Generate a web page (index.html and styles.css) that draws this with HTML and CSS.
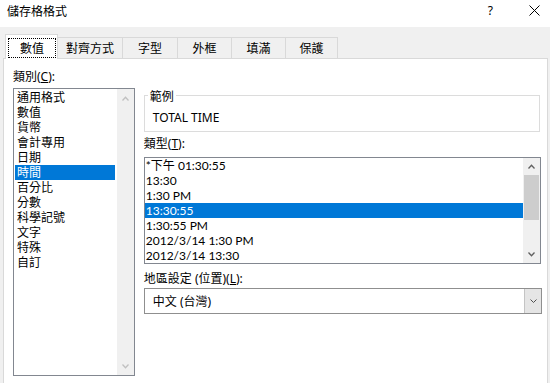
FILE: index.html
```html
<!DOCTYPE html>
<html lang="zh-Hant">
<head>
<meta charset="utf-8">
<title>儲存格格式</title>
<link rel="stylesheet" href="styles.css">
</head>
<body>
<div class="dialog">
  <div class="titlebar">
    <span class="title">儲存格格式</span>
    <span class="help">?</span>
    <span class="close"><svg width="11" height="11" viewBox="0 0 11 11"><path d="M0.5 0.5 L10.5 10.5 M10.5 0.5 L0.5 10.5" stroke="#000" stroke-width="1" fill="none"/></svg></span>
  </div>
  <div class="body">
    <div class="tabs">
      <div class="tab active w1"><span class="focus">數值</span></div>
      <div class="tab w2">對齊方式</div>
      <div class="tab w3">字型</div>
      <div class="tab w4">外框</div>
      <div class="tab w4">填滿</div>
      <div class="tab w5">保護</div>
    </div>
    <div class="panel">
      <div class="label">類別(<u>C</u>):</div>
      <div class="cols">
        <div class="listbox catlist">
          <ul class="items">
            <li>通用格式</li>
            <li>數值</li>
            <li>貨幣</li>
            <li>會計專用</li>
            <li>日期</li>
            <li class="sel">時間</li>
            <li>百分比</li>
            <li>分數</li>
            <li>科學記號</li>
            <li>文字</li>
            <li>特殊</li>
            <li>自訂</li>
          </ul>
          <div class="vscroll disabled">
            <span class="arrow"><svg width="7" height="5" viewBox="0 0 7 5"><polyline points="0.5,4.5 3.5,1.2 6.5,4.5"/></svg></span>
            <span class="track"></span>
            <span class="arrow"><svg width="7" height="5" viewBox="0 0 7 5"><polyline points="0.5,0.5 3.5,3.8 6.5,0.5"/></svg></span>
          </div>
        </div>
        <div class="right">
          <fieldset class="sample">
            <legend>範例</legend>
            <div class="sample-text">TOTAL TIME</div>
          </fieldset>
          <div class="label type-label">類型(<u>T</u>):</div>
          <div class="listbox typelist">
            <ul class="items">
              <li>*下午 01:30:55</li>
              <li>13:30</li>
              <li>1:30 PM</li>
              <li class="sel">13:30:55</li>
              <li>1:30:55 PM</li>
              <li>2012/3/14 1:30 PM</li>
              <li>2012/3/14 13:30</li>
            </ul>
            <div class="vscroll">
              <span class="arrow"><svg width="7" height="5" viewBox="0 0 7 5"><polyline points="0.5,4.5 3.5,1.2 6.5,4.5"/></svg></span>
              <span class="track"><span class="thumb"></span></span>
              <span class="arrow"><svg width="7" height="5" viewBox="0 0 7 5"><polyline points="0.5,0.5 3.5,3.8 6.5,0.5"/></svg></span>
            </div>
          </div>
          <div class="label locale-label">地區設定 (位置)(<u>L</u>):</div>
          <div class="combo">
            <span class="combo-text">中文 (台灣)</span>
            <span class="dropbtn"><svg width="7" height="4" viewBox="0 0 7 4"><polyline points="0.5,0.5 3.5,3.5 6.5,0.5"/></svg></span>
          </div>
        </div>
      </div>
    </div>
  </div>
</div>
</body>
</html>
```

FILE: styles.css
```css
* { box-sizing: border-box; }

html, body {
  margin: 0;
  padding: 0;
}

body {
  width: 550px;
  height: 383px;
  overflow: hidden;
  background: #f0f0f0;
  font-family: "Noto Sans", "Noto Sans CJK TC", sans-serif;
  font-size: 12px;
  line-height: 15px;
  color: #000;
}

.dialog {
  width: 550px;
}

.titlebar {
  height: 27px;
  background: #fff;
  display: flex;
  align-items: flex-start;
  padding: 3px 10px 0 7px;
}

.title {
  font-family: "Noto Sans CJK TC", sans-serif;
}

.help {
  margin-left: auto;
  margin-right: 36px;
}

.close {
  display: flex;
  padding-top: 2px;
}

.body {
  padding: 7px 2px 0 3px;
}

.tabs {
  display: flex;
  align-items: flex-end;
  height: 24px;
  padding-left: 2px;
}

.tab {
  height: 21px;
  border: 1px solid #d9d9d9;
  border-bottom: none;
  background: #f0f0f0;
  text-align: center;
  padding-top: 2px;
  margin-left: -1px;
  font-family: "Noto Sans CJK TC", sans-serif;
}

.tab.active {
  height: 25px;
  margin-left: 0;
  margin-bottom: -1px;
  background: #fff;
  padding: 3px 1px 1px 2px;
  position: relative;
  z-index: 1;
}

.focus {
  display: block;
  height: 20px;
  border: 1px dotted #000;
  padding-top: 1px;
}

.w1 { width: 53px; }
.w2 { width: 66px; }
.w3 { width: 56px; }
.w4 { width: 55px; }
.w5 { width: 53px; }

.panel {
  background: #fff;
  border: 1px solid #d9d9d9;
  padding: 10px 5px 0 9px;
  height: 340px;
}

.cols {
  display: flex;
  gap: 9px;
  margin-top: 4px;
}

.listbox {
  display: flex;
  border: 1px solid #828790;
  background: #fff;
}

.items {
  list-style: none;
  margin: 0;
  flex: 1;
  font-family: "Lato", "Noto Sans CJK TC", sans-serif;
}

.items li {
  height: 15px;
  white-space: nowrap;
}

.items li.sel {
  background: #0078d7;
  color: #fff;
}

.catlist {
  width: 122px;
  height: 288px;
}

.catlist .items {
  padding: 1px 2px 0 1px;
}

.catlist .items li {
  padding-left: 2px;
}

.vscroll {
  width: 17px;
  background: #f0f0f0;
  display: flex;
  flex-direction: column;
}

.vscroll .arrow {
  height: 17px;
  display: flex;
  align-items: center;
  justify-content: center;
}

.vscroll .track {
  flex: 1;
  display: flex;
  flex-direction: column;
}

.vscroll svg polyline {
  fill: none;
  stroke: #606060;
  stroke-width: 1.3;
}

.vscroll.disabled svg polyline {
  stroke: #c0c0c0;
}

.catlist .vscroll .arrow {
  height: 18px;
}

.thumb {
  display: block;
  height: 45px;
  margin: 0 1px;
  background: #cdcdcd;
}

.right {
  width: 399px;
  display: flex;
  flex-direction: column;
}

.sample {
  margin: 0 2px 0 0;
  padding: 7px 4px 6px 8px;
  border: 1px solid #dcdcdc;
  min-width: 0;
}

.sample legend {
  padding: 0 2px;
  margin-left: -5px;
  font-family: "Noto Sans CJK TC", sans-serif;
}

.sample-text {
  height: 15px;
}

.type-label {
  margin-top: 4px;
}

.typelist {
  margin-top: 6px;
  margin-right: 1px;
  height: 107px;
}

.typelist .items {
  padding: 0;
}

.typelist .items li {
  padding-left: 1px;
}

.locale-label {
  margin-top: 7px;
}

.combo {
  margin-top: 2px;
  height: 26px;
  border: 1px solid #8f8f8f;
  display: flex;
  align-items: stretch;
}

.combo-text {
  flex: 1;
  padding-left: 8px;
  display: flex;
  align-items: center;
}

.dropbtn {
  width: 17px;
  background: #e5e5e5;
  border-left: 1px solid #c4c4c4;
  display: flex;
  align-items: center;
  justify-content: center;
}

.dropbtn polyline {
  fill: none;
  stroke: #505050;
  stroke-width: 1;
}
```
